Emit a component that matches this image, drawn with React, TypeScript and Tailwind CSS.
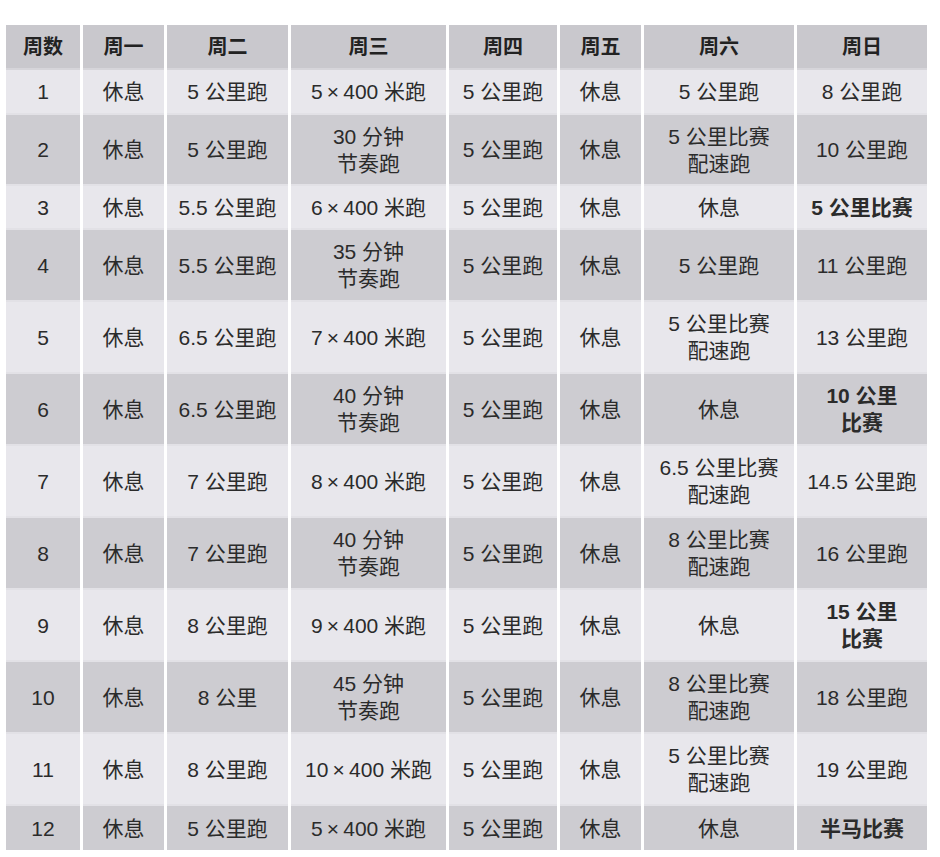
import React from 'react';

type Cell = string | { text: string; bold: boolean };

const headers = ['周数', '周一', '周二', '周三', '周四', '周五', '周六', '周日'];

const rows: { h: string; cells: Cell[] }[] = [
  { h: 'h-[45px]', cells: ['1', '休息', '5 公里跑', '5\u2009×\u2009400 米跑', '5 公里跑', '休息', '5 公里跑', '8 公里跑'] },
  { h: 'h-[71px]', cells: ['2', '休息', '5 公里跑', '30 分钟\n节奏跑', '5 公里跑', '休息', '5 公里比赛\n配速跑', '10 公里跑'] },
  { h: 'h-[44px]', cells: ['3', '休息', '5.5 公里跑', '6\u2009×\u2009400 米跑', '5 公里跑', '休息', '休息', { text: '5 公里比赛', bold: true }] },
  { h: 'h-[72px]', cells: ['4', '休息', '5.5 公里跑', '35 分钟\n节奏跑', '5 公里跑', '休息', '5 公里跑', '11 公里跑'] },
  { h: 'h-[72px]', cells: ['5', '休息', '6.5 公里跑', '7\u2009×\u2009400 米跑', '5 公里跑', '休息', '5 公里比赛\n配速跑', '13 公里跑'] },
  { h: 'h-[72px]', cells: ['6', '休息', '6.5 公里跑', '40 分钟\n节奏跑', '5 公里跑', '休息', '休息', { text: '10 公里\n比赛', bold: true }] },
  { h: 'h-[72px]', cells: ['7', '休息', '7 公里跑', '8\u2009×\u2009400 米跑', '5 公里跑', '休息', '6.5 公里比赛\n配速跑', '14.5 公里跑'] },
  { h: 'h-[72px]', cells: ['8', '休息', '7 公里跑', '40 分钟\n节奏跑', '5 公里跑', '休息', '8 公里比赛\n配速跑', '16 公里跑'] },
  { h: 'h-[72px]', cells: ['9', '休息', '8 公里跑', '9\u2009×\u2009400 米跑', '5 公里跑', '休息', '休息', { text: '15 公里\n比赛', bold: true }] },
  { h: 'h-[72px]', cells: ['10', '休息', '8 公里', '45 分钟\n节奏跑', '5 公里跑', '休息', '8 公里比赛\n配速跑', '18 公里跑'] },
  { h: 'h-[72px]', cells: ['11', '休息', '8 公里跑', '10\u2009×\u2009400 米跑', '5 公里跑', '休息', '5 公里比赛\n配速跑', '19 公里跑'] },
  { h: 'h-[44px]', cells: ['12', '休息', '5 公里跑', '5\u2009×\u2009400 米跑', '5 公里跑', '休息', '休息', { text: '半马比赛', bold: true }] },
];

const App: React.FC = () => {
  return (
    <div
      className="w-[940px] h-[857px] bg-white pt-[25px] pl-[6px]"
      style={{ fontFamily: '"Liberation Sans", "Noto Sans CJK SC", sans-serif' }}
    >
      <div className="grid grid-cols-[74px_81px_121px_155px_108px_81px_150px_130px] gap-x-[3px] w-[921px]">
        {headers.map((t) => (
          <div
            key={t}
            className="h-[45px] flex items-center justify-center bg-[#c9c8cd] text-[20px] font-bold text-[#222] border-b-2 border-[#d6d5da]"
          >
            {t}
          </div>
        ))}
        {rows.map((row, ri) =>
          row.cells.map((c, ci) => {
            const text = typeof c === 'string' ? c : c.text;
            const bold = typeof c !== 'string' && c.bold;
            const bg = ri % 2 === 0 ? 'bg-[#e8e7ec]' : 'bg-[#cdccd1]';
            const last = ri === rows.length - 1;
            return (
              <div
                key={`${ri}-${ci}`}
                className={`${row.h} ${bg} ${last ? '' : 'border-b-2 border-[#e2e1e6]'} flex flex-col items-center justify-center text-center text-[21px] leading-[27px] text-[#2b2b2b] ${bold ? 'font-bold text-[19px]' : ''}`}
              >
                {text.split('\n').map((line) => (
                  <span key={line} className="whitespace-nowrap">
                    {line}
                  </span>
                ))}
              </div>
            );
          })
        )}
      </div>
    </div>
  );
};

export default App;
